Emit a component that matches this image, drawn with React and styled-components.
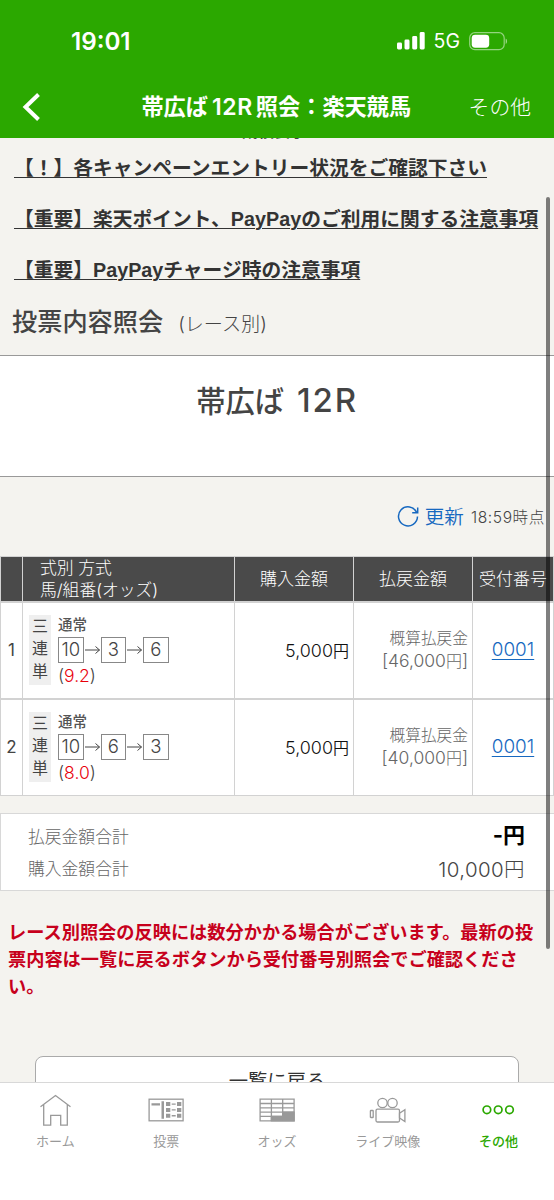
import styled, { createGlobalStyle } from 'styled-components'

const bets = [
  { no: 1, horses: [10, 3, 6], odds: '9.2', amount: '5,000', refund: '46,000' },
  { no: 2, horses: [10, 6, 3], odds: '8.0', amount: '5,000', refund: '40,000' },
]

function SignalIcon() {
  return (
    <svg width="28" height="18" viewBox="0 0 28 18" fill="#fff">
      <rect x="0" y="10.500" width="5" height="7" rx="1.400" />
      <rect x="7.500" y="7.500" width="5" height="10" rx="1.400" />
      <rect x="15.200" y="4" width="5" height="13.500" rx="1.400" />
      <rect x="22.700" y="0" width="5" height="17.500" rx="1.400" />
    </svg>
  )
}

function BatteryIcon() {
  return (
    <svg width="39" height="19" viewBox="0 0 39 19" fill="#fff">
      <rect x="0.700" y="0.700" width="34.500" height="17" rx="5.200" fill="none" stroke="#fff" strokeOpacity="0.5" strokeWidth="1.200" />
      <rect x="2.700" y="2.700" width="17.500" height="13" rx="3.400" />
      <path d="M36.700 6.500c1.800.8 1.800 4.700 0 5.500z" fillOpacity="0.55" />
    </svg>
  )
}

function Arrow() {
  return (
    <svg width="17" height="12" viewBox="0 0 17 12" fill="none" stroke="#444" strokeWidth="1">
      <path d="M1 6h14.500M11.500 2.500L15.500 6l-4 3.500" />
    </svg>
  )
}

function HomeIcon() {
  return (
    <svg width="36" height="36" viewBox="0 0 36 36" fill="none" stroke="#999" strokeWidth="1.300">
      <path d="M3.500 14.700L18.500 3.500l15 11.200M6.700 12.500v20.700h7V23.300h10v9.900h6.600V12.500" />
    </svg>
  )
}

function VoteIcon() {
  return (
    <svg width="36" height="36" viewBox="0 0 36 36" fill="#999">
      <rect x="1.100" y="7.200" width="34" height="21.600" fill="none" stroke="#999" strokeWidth="1.300" />
      <path d="M3.500 11.200h8.500v2.400H3.500zM13.500 9.200h2.500v17.500h-2.500zM18 10h4.300v4H18zM18 15.900h4.300v4H18zM18 21.700h4.300v4H18zM29 10h4.300v4H29zM29 15.900h4.300v4H29zM29 21.700h4.300v4H29zM23.700 11.500h4v1.300h-4zM23.700 17.300h4v1.300h-4zM23.700 23.100h4v1.300h-4z" />
    </svg>
  )
}

function OddsIcon() {
  return (
    <svg width="36" height="36" viewBox="0 0 36 36" fill="none" stroke="#999" strokeWidth="1.300">
      <path d="M1.100 7.200h34v21.600h-34zM1.100 11.500h34M1.100 15.800h34M1.100 20.100h34M1.100 24.400h22M12.400 7.200v21.600M23.700 7.200v21.600" />
      <path d="M12.400 24.400h11.300v-4.300h11.400v8.700H12.400z" fill="#999" />
    </svg>
  )
}

function LiveIcon() {
  return (
    <svg width="38" height="36" viewBox="0 0 38 36" fill="none" stroke="#999" strokeWidth="1.300">
      <circle cx="13.500" cy="11" r="4.700" />
      <circle cx="23.500" cy="11" r="4.700" />
      <rect x="7" y="17.200" width="23.500" height="12.800" rx="1.500" />
      <path d="M30.500 21.200l5.400-3.500v11.800L30.500 26z" />
      <rect x="1.400" y="18.500" width="2.800" height="7" rx="0.600" />
    </svg>
  )
}

function MoreIcon() {
  return (
    <svg width="36" height="36" viewBox="0 0 36 36" fill="none" stroke="#2ba800" strokeWidth="1.700">
      <circle cx="5.900" cy="17.800" r="3.800" />
      <circle cx="17.200" cy="17.800" r="3.800" />
      <circle cx="28.500" cy="17.800" r="3.800" />
    </svg>
  )
}

const tabs = [
  { label: 'ホーム', Icon: HomeIcon },
  { label: '投票', Icon: VoteIcon },
  { label: 'オッズ', Icon: OddsIcon },
  { label: 'ライブ映像', Icon: LiveIcon },
  { label: 'その他', Icon: MoreIcon, active: true },
]

function BetRow({ bet }) {
  return (
    <>
      <Cell>{bet.no}</Cell>
      <Cell $align="flex-start">
        <BetType>
          <span>三</span>
          <span>連</span>
          <span>単</span>
        </BetType>
        <BetDetail>
          <Method>通常</Method>
          <Horses>
            <Horse>{bet.horses[0]}</Horse>
            <Arrow />
            <Horse>{bet.horses[1]}</Horse>
            <Arrow />
            <Horse>{bet.horses[2]}</Horse>
          </Horses>
          <Odds>
            (<em>{bet.odds}</em>)
          </Odds>
        </BetDetail>
      </Cell>
      <Cell $align="flex-end">
        <Amount>
          {bet.amount}
          <Yen>円</Yen>
        </Amount>
      </Cell>
      <Cell $align="flex-end">
        <Refund>
          <small>概算払戻金</small>
          <span>
            [{bet.refund}
            <Yen>円</Yen>]
          </span>
        </Refund>
      </Cell>
      <Cell>
        <ReceiptLink href="#">0001</ReceiptLink>
      </Cell>
    </>
  )
}

function App() {
  return (
    <Screen>
      <GlobalStyle />
      <Header>
        <StatusBar>
          <Clock>19:01</Clock>
          <SignalIcon />
          <Network>5G</Network>
          <BatteryIcon />
        </StatusBar>
        <NavBar>
          <svg width="20" height="30" viewBox="0 0 20 30" fill="none" stroke="#fff" strokeWidth="4">
            <path d="M17.500 2.500L4.500 15l13 12.500" />
          </svg>
          <Title>
            帯広ば<b>12R</b>照会：楽天競馬
          </Title>
          <NavAction>その他</NavAction>
        </NavBar>
      </Header>

      <Content>
        <Previous>成績表示</Previous>
        <Notices>
          <a href="#">【！】各キャンペーンエントリー状況をご確認下さい</a>
          <a href="#">【重要】楽天ポイント、PayPayのご利用に関する注意事項</a>
          <a href="#">【重要】PayPayチャージ時の注意事項</a>
        </Notices>
        <Heading>
          投票内容照会<small>(レース別)</small>
        </Heading>
        <Race>
          帯広ば<b>12R</b>
        </Race>
        <Refresh>
          <svg width="24" height="24" viewBox="0 0 24 24" fill="none" stroke="#1668c0" strokeWidth="1.500">
            <path d="M20.600 8.300A9.500 9.500 0 1 0 21.500 12.500M21.700 3.500v5.300h-5.500" />
          </svg>
          <a href="#">更新</a>
          <span>18:59時点</span>
        </Refresh>

        <Table>
          <Head />
          <Head $left>
            式別 方式
            <br />
            馬/組番(オッズ)
          </Head>
          <Head>購入金額</Head>
          <Head>払戻金額</Head>
          <Head>受付番号</Head>
          {bets.map((bet) => (
            <BetRow key={bet.no} bet={bet} />
          ))}
        </Table>

        <Totals>
          <TotalRow>
            <span>払戻金額合計</span>
            <strong>-円</strong>
          </TotalRow>
          <TotalRow>
            <span>購入金額合計</span>
            <p>10,000円</p>
          </TotalRow>
        </Totals>

        <Warning>
          レース別照会の反映には数分かかる場合がございます。最新の投票内容は一覧に戻るボタンから受付番号別照会でご確認ください。
        </Warning>
        <BackButton>一覧に戻る</BackButton>
        <ScrollThumb />
      </Content>

      <TabBar>
        {tabs.map(({ label, Icon, active }) => (
          <Tab key={label} $active={active}>
            <Icon />
            {label}
          </Tab>
        ))}
      </TabBar>
    </Screen>
  )
}

const GlobalStyle = createGlobalStyle`
  * {
    box-sizing: border-box;
  }

  body {
    margin: 0;
    font-family: Inter, 'Noto Sans CJK JP', sans-serif;
    color: #444;
  }

  button {
    font-family: inherit;
  }

  svg {
    display: block;
    flex-shrink: 0;
  }
`

const Screen = styled.div`
  display: flex;
  flex-direction: column;
  width: 554px;
  height: 1200px;
  overflow: hidden;
  background: #f4f3ef;
`

const Header = styled.header`
  height: 138px;
  flex-shrink: 0;
  background: #2ba800;
  color: #fff;
`

const StatusBar = styled.div`
  display: flex;
  align-items: center;
  height: 76px;
  padding: 6px 46px 0 71px;
`

const Clock = styled.div`
  margin-right: auto;
  font-size: 24.2px;
  font-weight: 600;
`

const Network = styled.div`
  margin: 0 9px;
  font-size: 19.5px;
  font-weight: 400;
`

const NavBar = styled.div`
  display: flex;
  justify-content: space-between;
  align-items: center;
  height: 62px;
  padding: 0 23px 0 21px;
`

const Title = styled.h1`
  margin: 0 0 4px 43px;
  font-size: 22.2px;
  font-weight: 700;
  white-space: nowrap;

  b {
    margin: 0 3px 0 4px;
    font-weight: 600;
    font-size: 23px;
    letter-spacing: 0.6px;
  }
`

const NavAction = styled.div`
  margin-bottom: 2px;
  font-size: 20.8px;
  font-weight: 300;
`

const Content = styled.main`
  position: relative;
  flex: 1;
  overflow: hidden;
`

const Previous = styled.div`
  height: 16px;
  margin-top: -15px;
  padding-right: 6px;
  text-align: center;
  font-size: 16px;
  line-height: 16px;
  font-weight: 700;
`

const Notices = styled.div`
  display: flex;
  flex-direction: column;
  align-items: flex-start;
  padding: 4px 0 0 14px;
  font-family: 'Liberation Sans', 'Noto Sans CJK JP', sans-serif;
  font-size: 19.76px;
  font-weight: 700;
  line-height: 51px;
  white-space: nowrap;

  a {
    color: #333;
    text-decoration-thickness: 1px;
    text-underline-offset: 2px;
  }
`

const Heading = styled.h2`
  display: flex;
  align-items: baseline;
  height: 59px;
  margin: 0;
  padding-left: 12px;
  font-size: 25.2px;
  font-weight: 500;
  line-height: 52px;

  small {
    margin-left: 15px;
    font-size: 19.1px;
    font-weight: 300;
  }
`

const Race = styled.div`
  height: 122px;
  padding-top: 22px;
  border-top: 1px solid #999;
  border-bottom: 1px solid #999;
  background: #fff;
  text-align: center;
  font-size: 29.3px;
  font-weight: 500;
  line-height: 44px;

  b {
    margin-left: 13px;
    font-weight: 500;
    font-size: 33px;
    letter-spacing: 1.8px;
  }
`

const Refresh = styled.div`
  display: flex;
  justify-content: flex-end;
  align-items: center;
  height: 79px;
  padding: 0 9px 2px 0;

  a {
    margin: 0 7px 0 5px;
    font-size: 19.6px;
    font-weight: 350;
    color: #1668c0;
    text-decoration: none;
  }

  span {
    font-size: 15.6px;
    font-weight: 300;
    letter-spacing: 0.6px;
  }
`

const Table = styled.div`
  display: grid;
  grid-template-columns: 21px 211px 118px 118px 80px;
  grid-template-rows: 44px 95px 95px;
  gap: 2px 1px;
  padding: 1px;
  background: #d2d2d2;
  font-size: 17px;
`

const Head = styled.div`
  display: flex;
  align-items: center;
  justify-content: ${(props) => (props.$left ? 'flex-start' : 'center')};
  padding-left: ${(props) => (props.$left ? '17px' : '0')};
  background: #4a4a4a;
  color: #fff;
  font-size: ${(props) => (props.$left ? '16.8px' : '17px')};
  font-weight: 300;
  line-height: 22.5px;
  white-space: nowrap;
`

const Cell = styled.div`
  display: flex;
  align-items: center;
  justify-content: ${(props) => props.$align || 'center'};
  padding: ${(props) => (props.$align === 'flex-end' ? '0 4px 2px 0' : props.$align ? '0 0 0 6px' : '0 0 2px')};
  background: #fff;
`

const BetType = styled.div`
  display: flex;
  flex-direction: column;
  align-items: center;
  width: 22px;
  height: 70px;
  margin-bottom: 2px;
  background: #efefef;
  font-size: 16px;
  line-height: 22.5px;
`

const BetDetail = styled.div`
  margin-left: 7px;
`

const Method = styled.div`
  color: #555;
  font-size: 14.5px;
  font-weight: 500;
  line-height: 24px;
`

const Horses = styled.div`
  display: flex;
  align-items: center;
`

const Horse = styled.div`
  width: 25.5px;
  height: 26px;
  border: 1px solid #888;
  text-align: center;
  font-size: 18.5px;
  font-weight: 350;
  line-height: 23px;
`

const Odds = styled.div`
  font-size: 17.5px;
  font-weight: 350;
  line-height: 26px;

  em {
    font-style: normal;
    color: #e8000b;
  }
`

const Amount = styled.div`
  color: #111;
  font-size: 17.9px;
  font-weight: 350;
`

const Yen = styled.span`
  font-size: 16px;
`

const Refund = styled.div`
  display: flex;
  flex-direction: column;
  align-items: flex-end;
  color: #666;
  font-weight: 300;
  font-size: 17.5px;
  line-height: 22px;

  small {
    font-size: 15.7px;
  }
`

const ReceiptLink = styled.a`
  color: #1668c0;
  font-size: 18.9px;
  font-weight: 350;
  text-underline-offset: 3px;
  text-decoration-thickness: 1px;
`

const Totals = styled.div`
  height: 78px;
  margin-top: 17px;
  padding: 6px 29px 0 27px;
  border: 1px solid #d8d8d8;
  border-right: 0;
  background: #fff;
`

const TotalRow = styled.div`
  display: flex;
  justify-content: space-between;
  align-items: center;
  height: 32px;
  padding-bottom: 1px;
  font-size: 16.8px;

  span {
    color: #666;
    font-weight: 300;
  }

  strong {
    color: #000;
    font-size: 22px;
    line-height: 24px;
    margin-bottom: 2px;
  }

  p {
    margin: 0;
    font-size: 20.5px;
    font-weight: 300;
    letter-spacing: 0.4px;
  }
`

const Warning = styled.p`
  margin: 28px 0 0;
  padding: 0 12px 0 8px;
  color: #c7001c;
  font-size: 18.22px;
  font-weight: 700;
  line-height: 27px;
  word-break: break-all;
`

const BackButton = styled.button`
  display: block;
  width: 484px;
  height: 52px;
  margin: 56px 0 0 35px;
  padding: 0 0 5px;
  border: 1px solid #aaa;
  border-radius: 8px;
  background: #fff;
  color: #333;
  font-size: 19.3px;
`

const ScrollThumb = styled.div`
  position: absolute;
  top: 59px;
  right: 4px;
  width: 4px;
  height: 752px;
  border-radius: 2px;
  background: rgba(0, 0, 0, 0.5);
`

const TabBar = styled.nav`
  display: grid;
  grid-template-columns: repeat(5, 1fr);
  height: 118px;
  flex-shrink: 0;
  padding-top: 9px;
  border-top: 1px solid #d8d8d8;
  background: #fff;
`

const Tab = styled.div`
  display: flex;
  flex-direction: column;
  align-items: center;
  gap: 4px;
  color: ${(props) => (props.$active ? '#2ba800' : '#999')};
  font-size: 13px;
  font-weight: ${(props) => (props.$active ? 500 : 400)};
  line-height: 19px;
`

export default App
